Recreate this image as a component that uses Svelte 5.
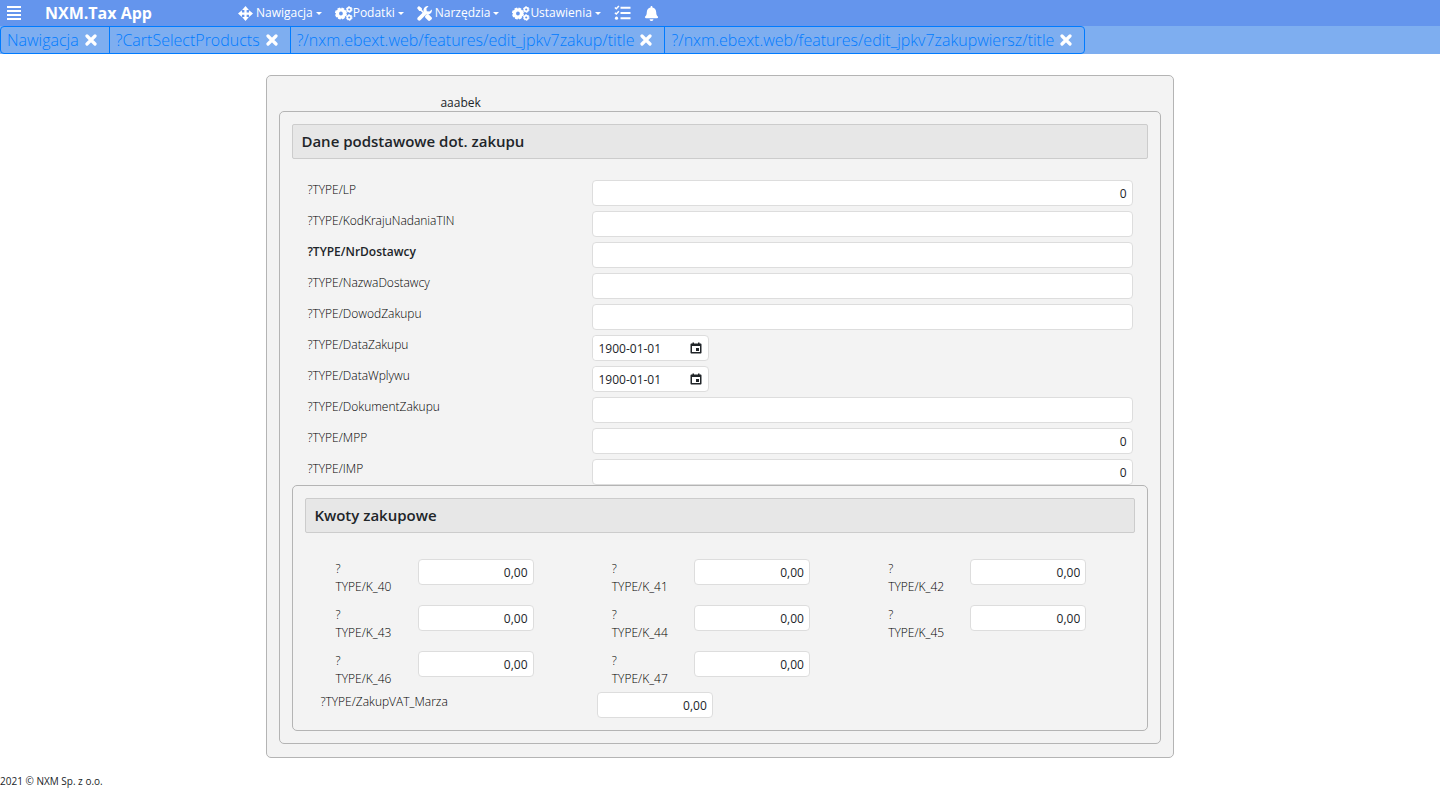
<script>
  const menus = [
    { icon: "move", label: "Nawigacja" },
    { icon: "cogs", label: "Podatki" },
    { icon: "tools", label: "Narzędzia" },
    { icon: "cogs", label: "Ustawienia" },
  ];

  let tabs = $state([
    "Nawigacja",
    "?CartSelectProducts",
    "?/nxm.ebext.web/features/edit_jpkv7zakup/title",
    "?/nxm.ebext.web/features/edit_jpkv7zakupwiersz/title",
  ]);

  let fields = $state([
    { name: "LP", type: "number", value: "0" },
    { name: "KodKrajuNadaniaTIN", type: "text", value: "" },
    { name: "NrDostawcy", type: "text", value: "", required: true },
    { name: "NazwaDostawcy", type: "text", value: "" },
    { name: "DowodZakupu", type: "text", value: "" },
    { name: "DataZakupu", type: "date", value: "1900-01-01" },
    { name: "DataWplywu", type: "date", value: "1900-01-01" },
    { name: "DokumentZakupu", type: "text", value: "" },
    { name: "MPP", type: "number", value: "0" },
    { name: "IMP", type: "number", value: "0" },
  ]);

  let amounts = $state(
    [40, 41, 42, 43, 44, 45, 46, 47].map((n) => ({
      name: `K_${n}`,
      value: "0,00",
    })),
  );

  let margin = $state("0,00");

  /**
   * Closes a tab
   * @param {number} index
   */
  function closeTab(index) {
    tabs.splice(index, 1);
  }
</script>

{#snippet icon(name)}
  {#if name == "move"}
    <svg class="icon" viewBox="0 0 16 16" aria-hidden="true">
      <path d="M8 2v12M2 8h12" stroke="currentColor" stroke-width="2.4" />
      <path
        d="M8 0l3.6 4.2H4.4zM8 16l3.6-4.2H4.4zM0 8l4.2-3.6v7.2zM16 8l-4.2-3.6v7.2z"
      />
    </svg>
  {:else if name == "cogs"}
    <svg class="icon wide" viewBox="0 0 20 16" aria-hidden="true">
      <g fill="none" stroke="currentColor">
        <circle cx="6.6" cy="8" r="3.9" stroke-width="3.6" />
        <circle
          cx="6.6"
          cy="8"
          r="5.8"
          stroke-width="1.8"
          stroke-dasharray="3 1.555"
        />
        <circle cx="15.8" cy="3.6" r="2.1" stroke-width="1.8" />
        <circle
          cx="15.8"
          cy="3.6"
          r="3.2"
          stroke-width="1"
          stroke-dasharray="2 1.351"
        />
        <circle cx="15.8" cy="12.4" r="2.1" stroke-width="1.8" />
        <circle
          cx="15.8"
          cy="12.4"
          r="3.2"
          stroke-width="1"
          stroke-dasharray="2 1.351"
        />
      </g>
    </svg>
  {:else if name == "tools"}
    <svg class="icon" viewBox="0 0 16 16" aria-hidden="true">
      <path
        d="M15.8 3.7a4.5 4.5 0 0 1-5.9 5.2L3.9 15a2 2 0 0 1-2.9-2.9l6.1-6.1A4.5 4.5 0 0 1 12.3.2L10 2.6l.4 2.9 2.9.4z"
      />
      <path d="M0 2l2-2 3.2 2.4v1.7l3 3L7 8.3l-3-3H2.4z" />
      <path
        d="M8.6 10.6l2-2 1.7.1 3.2 3.2a1.5 1.5 0 0 1 0 2.1l-1.5 1.5a1.5 1.5 0 0 1-2.1 0l-3.2-3.2z"
      />
    </svg>
  {:else if name == "tasks"}
    <svg class="icon list" viewBox="0 0 16 16" aria-hidden="true">
      <path
        d="M.4 2.5l1.4 1.3L4.4 1M.4 7.7l1.4 1.3 2.6-2.8"
        fill="none"
        stroke="currentColor"
        stroke-width="1.5"
      />
      <circle cx="2" cy="13.2" r="1.6" />
      <path
        d="M6 2.8h10M6 8h10M6 13.2h10"
        stroke="currentColor"
        stroke-width="2"
      />
    </svg>
  {:else if name == "bell"}
    <svg class="icon" viewBox="0 0 448 512" aria-hidden="true">
      <path
        d="M224 512c35.32 0 63.97-28.65 63.97-64H160.03c0 35.35 28.65 64 63.97 64zm215.39-149.71c-19.32-20.76-55.47-51.99-55.47-154.29 0-77.7-54.48-139.9-127.94-155.16V32c0-17.67-14.32-32-31.98-32s-31.98 14.33-31.98 32v20.84C118.56 68.1 64.08 130.3 64.08 208c0 102.3-36.15 133.53-55.47 154.29-6 6.45-8.66 14.16-8.61 21.71.11 16.4 12.98 32 32.1 32h383.8c19.12 0 32-15.6 32.1-32 .05-7.55-2.61-15.27-8.61-21.71z"
      />
    </svg>
  {:else if name == "times"}
    <svg class="icon close" viewBox="0 0 12 12" aria-hidden="true">
      <path
        d="M2 2l8 8M10 2l-8 8"
        stroke="currentColor"
        stroke-width="3.2"
        stroke-linecap="round"
      />
    </svg>
  {:else if name == "calendar"}
    <svg class="calendar" viewBox="0 0 24 24" aria-hidden="true">
      <path
        d="M21 3h-2V1h-3v2H8V1H5v2H3c-1.1 0-2 .9-2 2v16c0 1.1.9 2 2 2h18c1.1 0 2-.9 2-2V5c0-1.1-.9-2-2-2zm-1 17H4V8h16v12zM12 12h6v6h-6z"
      />
    </svg>
  {/if}
{/snippet}

<header>
  <button class="burger" aria-label="Menu">
    <svg viewBox="0 0 14 14" aria-hidden="true">
      <path d="M0 0h14v2H0zM0 4h14v2H0zM0 8h14v2H0zM0 12h14v2H0z" />
    </svg>
  </button>
  <a class="brand" href="#home">NXM.Tax App</a>
  <nav>
    {#each menus as menu}
      <button class="menu" class:tight={menu.icon == "cogs"}>
        {@render icon(menu.icon)}
        <span>{menu.label}</span>
        <i class="caret"></i>
      </button>
    {/each}
    <button class="menu" aria-label="Zadania">{@render icon("tasks")}</button>
    <button class="menu" aria-label="Powiadomienia"
      >{@render icon("bell")}</button
    >
  </nav>
</header>

<div class="tabbar">
  <div class="tabs">
    {#each tabs as tab, i}
      <div class="tab">
        <a href="#tab{i}">{tab}</a>
        <button aria-label="Zamknij" onclick={() => closeTab(i)}>
          {@render icon("times")}
        </button>
      </div>
    {/each}
  </div>
</div>

<main class="panel">
  <p class="user">aaabek</p>

  <section class="panel">
    <h2>Dane podstawowe dot. zakupu</h2>

    <div class="fields">
      {#each fields as field}
        <div class="field">
          <label for={field.name} class:required={field.required}
            >?TYPE/{field.name}</label
          >
          {#if field.type == "date"}
            <div class="date">
              <input id={field.name} type="text" bind:value={field.value} />
              <button aria-label="Wybierz datę"
                >{@render icon("calendar")}</button
              >
            </div>
          {:else}
            <input
              id={field.name}
              type="text"
              class:numeric={field.type == "number"}
              bind:value={field.value}
            />
          {/if}
        </div>
      {/each}
    </div>

    <section class="panel">
      <h2>Kwoty zakupowe</h2>

      <div class="amounts">
        {#each amounts as amount}
          <div class="amount">
            <label for={amount.name}>? TYPE/{amount.name}</label>
            <input
              id={amount.name}
              type="text"
              class="numeric"
              bind:value={amount.value}
            />
          </div>
        {/each}
      </div>

      <div class="margin">
        <label for="margin">?TYPE/ZakupVAT_Marza</label>
        <input id="margin" type="text" class="numeric" bind:value={margin} />
      </div>
    </section>
  </section>
</main>

<footer>2021 © NXM Sp. z o.o.</footer>

<style>
  :global(body) {
    background-color: white;
    color: #212529;
    font-family: "Segoe UI", "Open Sans", sans-serif;
    font-size: 12px;
    line-height: 18px;
  }

  :global(#app *) {
    box-sizing: border-box;
  }

  button {
    display: flex;
    align-items: center;
    background: none;
    border: 0;
    padding: 0;
    color: inherit;
    font: inherit;
    cursor: pointer;
  }

  a {
    color: inherit;
    text-decoration: none;
  }

  svg {
    fill: currentColor;
    flex: none;
  }

  header {
    display: flex;
    align-items: center;
    height: 26px;
    padding-left: 7px;
    background-color: cornflowerblue;
    color: white;
  }

  .burger {
    width: 38px;
  }

  .burger svg {
    width: 14px;
    height: 14px;
  }

  .brand {
    width: 193px;
    font-size: 16px;
    font-weight: 700;
    white-space: nowrap;
  }

  nav {
    display: flex;
    align-items: center;
    gap: 13px;
  }

  .menu {
    gap: 3px;
  }

  .menu.tight {
    gap: 0;
  }

  .icon {
    width: 15px;
    height: 15px;
  }

  .icon.wide {
    width: 18px;
  }

  .icon.list {
    width: 17px;
    height: 16px;
  }

  .icon.close {
    width: 12px;
    height: 12px;
  }

  .caret {
    border: 3px solid transparent;
    border-top-color: white;
    border-bottom: 0;
  }

  .menu.tight .caret {
    margin-left: 3px;
  }

  .tabbar {
    display: flex;
    background-color: #7eaef0;
  }

  .tabs {
    display: flex;
    border: 1px solid #007bff;
    border-radius: 4px;
  }

  .tab {
    display: flex;
    align-items: center;
    gap: 6px;
    height: 26px;
    padding: 0 12px 0 6px;
    color: #007bff;
    font-size: 16px;
    font-weight: 300;
    white-space: nowrap;
  }

  .tab + .tab {
    border-left: 1px solid #007bff;
  }

  .tab button {
    color: white;
  }

  .panel {
    padding: 12px;
    background-color: #f3f3f3;
    border: 1px solid #b4b4b4;
    border-radius: 5px;
  }

  main {
    width: 63%;
    margin: 21px auto 0;
  }

  main.panel {
    padding-bottom: 13px;
  }

  .user {
    margin: 7px 0 0;
    padding-left: 161px;
    line-height: 16px;
  }

  h2 {
    margin: 0;
    padding: 0 8px;
    background-color: #e7e7e7;
    border: 1px solid #ccc;
    border-radius: 2px;
    font-size: 15px;
    font-weight: 600;
    line-height: 33px;
  }

  .fields {
    display: grid;
    gap: 5px;
    padding-top: 21px;
  }

  .field {
    display: grid;
    grid-template-columns: 1fr 2fr;
  }

  .field > * {
    margin: 0 15px;
  }

  label {
    padding-top: 1px;
    color: black;
    font-weight: 300;
  }

  .required {
    color: #212529;
    font-weight: 600;
  }

  input {
    min-width: 0;
    height: 26px;
    padding: 0 5px;
    background-color: white;
    border: 1px solid #ddd;
    border-radius: 4px;
    color: #212529;
    font: inherit;
  }

  .numeric {
    text-align: right;
  }

  .date {
    display: flex;
    width: 117px;
    padding-right: 6px;
    background-color: white;
    border: 1px solid #ddd;
    border-radius: 4px;
  }

  .date input {
    flex: 1;
    height: 24px;
    border: 0;
  }

  .calendar {
    width: 12px;
    height: 12px;
  }

  .amounts {
    display: grid;
    grid-template-columns: repeat(3, 1fr);
    row-gap: 9px;
    padding-top: 26px;
  }

  .amount {
    display: grid;
    grid-template-columns: 1fr 2fr;
    padding: 0 15px;
  }

  .amount label {
    width: 52px;
    margin-left: 15px;
  }

  .amount input,
  .margin input {
    width: 116px;
    margin-left: 15px;
  }

  .margin {
    display: grid;
    grid-template-columns: 1fr 2fr;
    padding-top: 4px;
  }

  .margin label {
    margin-left: 15px;
  }

  footer {
    margin-top: 14px;
    font-size: 10px;
  }
</style>
